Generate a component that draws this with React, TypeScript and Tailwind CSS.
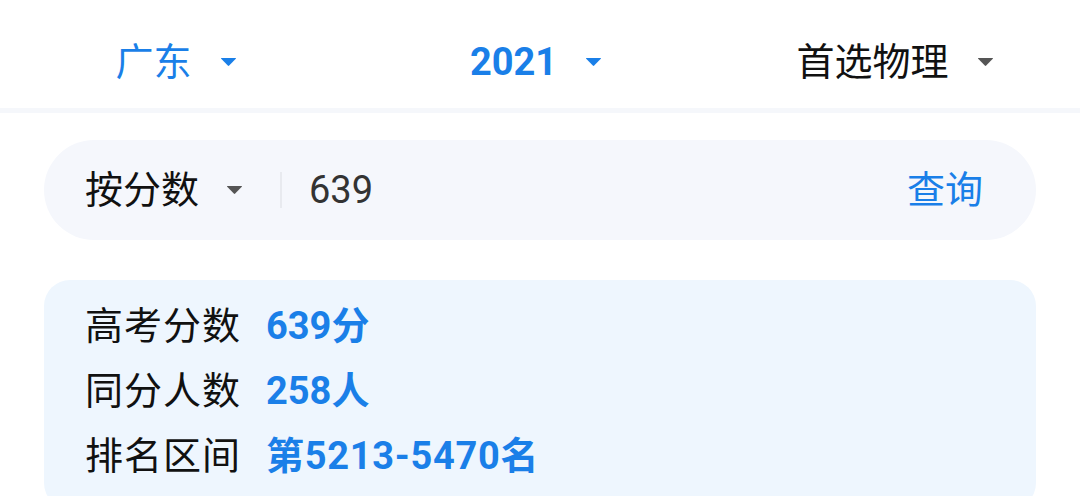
import React from "react";

const Caret = ({ color }: { color: string }) => (
  <svg width="17" height="10" viewBox="0 0 17 10" className="shrink-0">
    <path d="M1.5 1 H15.5 Q16.5 1 15.8 1.8 L9.2 8.6 Q8.5 9.3 7.8 8.6 L1.2 1.8 Q0.5 1 1.5 1 Z" fill={color} />
  </svg>
);

export default function App() {
  const font = { fontFamily: 'Roboto, "Noto Sans CJK SC", sans-serif' };
  return (
    <div className="w-[1080px] h-[496px] bg-white overflow-hidden" style={font}>
      <div className="h-[113px] grid grid-cols-3 border-b-[5px] border-[#f5f7fb] text-[38px] leading-none">
        <div className="flex items-center justify-center gap-[28px] pt-[16px] pr-[8px] text-[#1a7fe8]">
          <span>广东</span>
          <Caret color="#1a7fe8" />
        </div>
        <div className="flex items-center justify-center gap-[28px] pt-[16px] pr-[8px] font-bold text-[#1a7fe8]">
          <span>2021</span>
          <Caret color="#1a7fe8" />
        </div>
        <div className="flex items-center justify-center gap-[28px] pt-[16px] pr-[10px] text-[#111]">
          <span>首选物理</span>
          <Caret color="#555555" />
        </div>
      </div>

      <div className="px-[44px] pt-[27px]">
        <div className="h-[100px] rounded-full bg-[#f5f7fc] flex items-center pl-[41px] pr-[53px] text-[38px] leading-none">
          <span className="text-[#111]">按分数</span>
          <span className="ml-[27px]"><Caret color="#555555" /></span>
          <div className="ml-[37px] w-[2px] h-[36px] bg-[#e8eaef]" />
          <span className="ml-[27px] text-[#333]">639</span>
          <span className="ml-auto text-[#1a7fe8]">查询</span>
        </div>

        <div className="mt-[40px] rounded-[26px] bg-[#eef6fe] pl-[41px] pt-[14px] pb-[20px] text-[38px] leading-[65px]">
          <div className="flex gap-[25px]">
            <span className="text-[#111] tracking-[1px]">高考分数</span>
            <span className="font-bold text-[#1a7fe8]">639分</span>
          </div>
          <div className="flex gap-[25px]">
            <span className="text-[#111] tracking-[1px]">同分人数</span>
            <span className="font-bold text-[#1a7fe8]">258人</span>
          </div>
          <div className="flex gap-[25px]">
            <span className="text-[#111] tracking-[1px]">排名区间</span>
            <span className="font-bold text-[#1a7fe8] tracking-[0.7px]">第5213-5470名</span>
          </div>
        </div>
      </div>
    </div>
  );
}
